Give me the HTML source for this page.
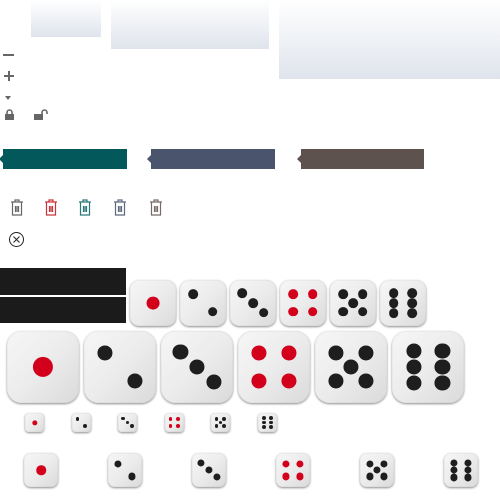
<!DOCTYPE html>
<html><head><style>
body{margin:0;width:500px;height:500px;background:#fff;position:relative;overflow:hidden;font-family:"Liberation Sans",sans-serif}
.a{position:absolute}
.g{background:linear-gradient(#fff,#dfe4ec)}
.bar{position:absolute;height:20px;top:149px}
.bar:before{content:"";position:absolute;left:-4px;top:6px;border-right:4px solid currentColor;border-top:4px solid transparent;border-bottom:4px solid transparent}
.die{position:absolute;border-radius:20%;background:linear-gradient(135deg,#f6f6f6 0%,#ececec 50%,#dadada 100%);box-shadow:0 1px 2px rgba(0,0,0,.45),inset 0 0 1px rgba(0,0,0,.2)}
.pip{position:absolute;border-radius:50%;background:#1e1e1e;transform:translate(-50%,-50%)}
.r{background:#d3001b}
</style></head><body>
<div class="a g" style="left:31px;top:0;width:70px;height:37px"></div>
<div class="a g" style="left:111px;top:0;width:158px;height:49px"></div>
<div class="a g" style="left:279px;top:0;width:221px;height:79px"></div>

<div class="a" style="left:3px;top:54px;width:11px;height:2px;background:#666"></div>
<div class="a" style="left:4px;top:75px;width:10px;height:2px;background:#666"></div>
<div class="a" style="left:8px;top:71px;width:2px;height:10px;background:#666"></div>
<div class="a" style="left:5px;top:96px;border-top:4px solid #666;border-left:3px solid transparent;border-right:3px solid transparent"></div>
<svg class="a" style="left:4px;top:109px" width="12" height="12"><path d="M3 5V3.5a2.5 2.5 0 0 1 5 0V5" stroke="#666" stroke-width="1.6" fill="none"/><rect x="1" y="5" width="9" height="6" fill="#666"/></svg>
<svg class="a" style="left:33px;top:109px" width="16" height="12"><path d="M9 5V3.5a2.5 2.5 0 0 1 5 0V5" stroke="#666" stroke-width="1.6" fill="none"/><rect x="1" y="5" width="9" height="6" fill="#666"/></svg>

<div class="bar" style="left:3px;width:124px;background:#02585a;color:#02585a"></div>
<div class="bar" style="left:151px;width:124px;background:#4a546d;color:#4a546d"></div>
<div class="bar" style="left:301px;width:123px;background:#5e524e;color:#5e524e"></div>

<svg class="a" style="left:0;top:198px" width="170" height="22">
<g fill="none" stroke-width="1.2">
<g stroke="#666" transform="translate(10,0)"><path d="M1 4h12M5 4V2h4v2M2.5 4.5v12.5h9V4.5M5.5 8v6M7 8v6M8.5 8v6"/></g>
<g stroke="#c9343a" transform="translate(44,0)"><path d="M1 4h12M5 4V2h4v2M2.5 4.5v12.5h9V4.5M5.5 8v6M7 8v6M8.5 8v6"/></g>
<g stroke="#2a7a7c" transform="translate(78,0)"><path d="M1 4h12M5 4V2h4v2M2.5 4.5v12.5h9V4.5M5.5 8v6M7 8v6M8.5 8v6"/></g>
<g stroke="#5e6880" transform="translate(113,0)"><path d="M1 4h12M5 4V2h4v2M2.5 4.5v12.5h9V4.5M5.5 8v6M7 8v6M8.5 8v6"/></g>
<g stroke="#776a66" transform="translate(149,0)"><path d="M1 4h12M5 4V2h4v2M2.5 4.5v12.5h9V4.5M5.5 8v6M7 8v6M8.5 8v6"/></g>
</g></svg>
<svg class="a" style="left:8px;top:231px" width="18" height="18"><circle cx="8.5" cy="8.5" r="7" fill="none" stroke="#222" stroke-width="1"/><path d="M5.5 5.5l6 6M11.5 5.5l-6 6" stroke="#222" stroke-width="1"/></svg>

<div class="a" style="left:0;top:268px;width:126px;height:27px;background:#1b1b1b"></div>
<div class="a" style="left:0;top:297px;width:126px;height:26px;background:#1b1b1b"></div>

<div id="d"></div>
<script>
var P={1:[[50,50]],2:[[29,31],[71,69]],3:[[27,29],[50,50],[73,71]],4:[[29,31],[71,31],[29,69],[71,69]],5:[[29,31],[71,31],[50,50],[29,69],[71,69]],6:[[30,28],[70,28],[30,50],[70,50],[30,72],[70,72]]};
var rows=[{y:280,s:46,x:[130,180,230,280,330,380]},{y:331,s:72,x:[7,84,161,238,315,392]},{y:413,s:19,x:[25,72,118,165,211,258]},{y:453,s:34,x:[24,108,192,276,360,444]}];
var h="";
rows.forEach(function(r){r.x.forEach(function(x,i){var n=i+1;h+='<div class="die" style="left:'+x+'px;top:'+r.y+'px;width:'+r.s+'px;height:'+r.s+'px">';
var ps=n==1?r.s*0.28:r.s*0.21;
P[n].forEach(function(p){h+='<div class="pip'+((n==1||n==4)?' r':'')+'" style="left:'+p[0]+'%;top:'+p[1]+'%;width:'+ps+'px;height:'+ps+'px"></div>';});
h+='</div>';});});
document.getElementById('d').innerHTML=h;
</script>
</body></html>
